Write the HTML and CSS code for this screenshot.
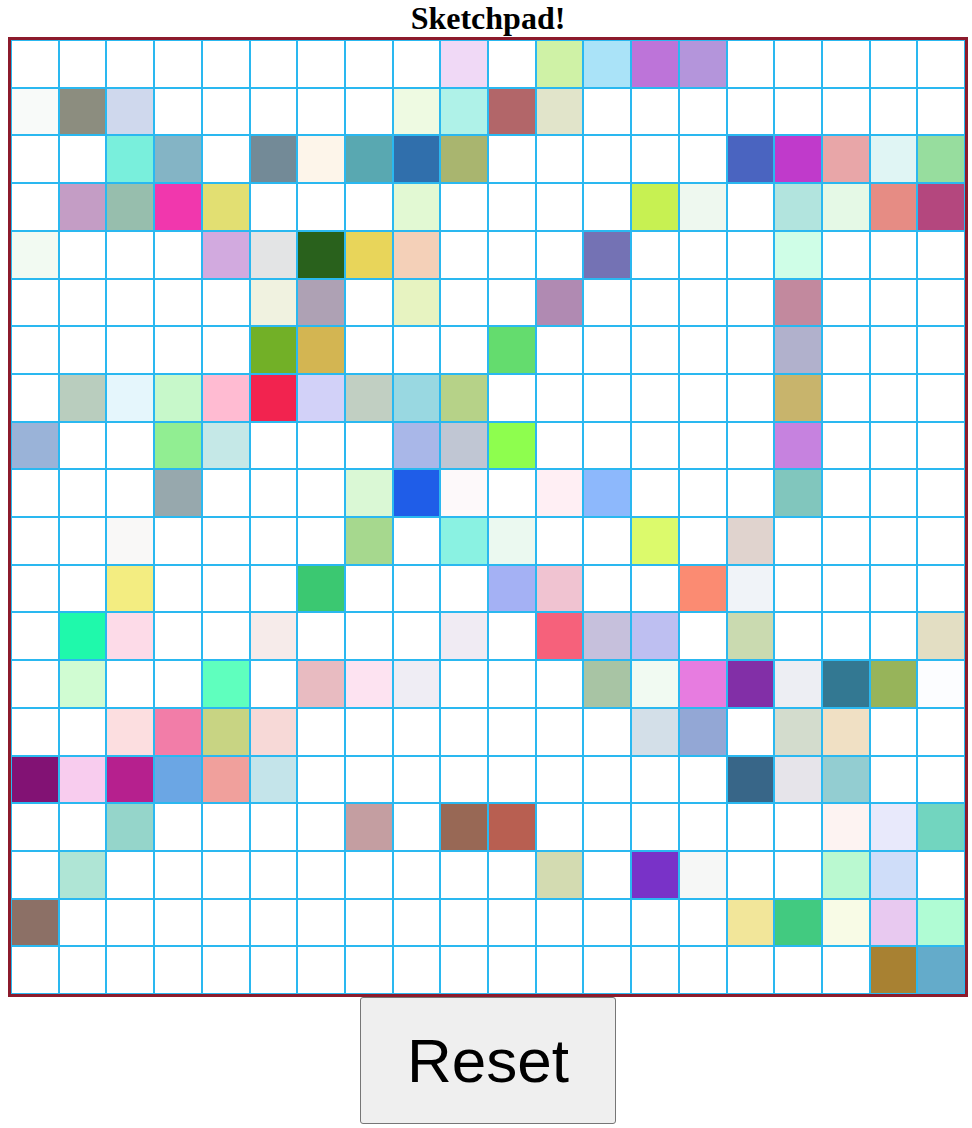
FILE: index.html
```html
<!DOCTYPE html>
<html lang="en">

<head>
  <meta charset="UTF-8" />
  <meta name="viewport" content="width=device-width, initial-scale=1" />
  <title>Sketchpad</title>
  <link rel="stylesheet" href="styles.css">
</head>

<body>
  <div class="sketchpad">
    <h1>Sketchpad!</h1>
    <div id="grid" class="grid"></div>
    <button id="reset" class="reset-btn">Reset</button>
  </div>

  <script>
    const grid = document.getElementById('grid');
    const resetBtn = document.getElementById('reset');
    const SIZE = 20;

    // cells already painted, "row,col": colour
    const painted = {
      '0,9': '#f0d9f6', '0,11': '#cff2a6', '0,12': '#aae3f8', '0,13': '#bd74d9', '0,14': '#b495db',
      '1,0': '#f8faf9', '1,1': '#8c8d7f', '1,2': '#cfd8ed', '1,8': '#eefae2', '1,9': '#aff2e8', '1,10': '#b26669', '1,11': '#e1e4ca',
      '2,2': '#79efdc', '2,3': '#84b4c5', '2,5': '#738a97', '2,6': '#fdf5ea', '2,7': '#59a8b1', '2,8': '#306fac', '2,9': '#a9b56f',
      '2,15': '#4a64c0', '2,16': '#c03acb', '2,17': '#e8a6a8', '2,18': '#e0f5f4', '2,19': '#97dd9e',
      '3,1': '#c49dc5', '3,2': '#97bead', '3,3': '#f137ad', '3,4': '#e2df72', '3,8': '#e2f9d3',
      '3,13': '#c7f152', '3,14': '#eef8ef', '3,16': '#b2e4de', '3,17': '#e5f9e6', '3,18': '#e68c84', '3,19': '#b4477e',
      '4,0': '#f2faf2', '4,4': '#d2aadf', '4,5': '#e3e4e5', '4,6': '#29611c', '4,7': '#e8d55a', '4,8': '#f4d0b8', '4,12': '#7472b4', '4,16': '#cffee7',
      '5,5': '#f0f2e0', '5,6': '#aea1b4', '5,8': '#e7f3c1', '5,11': '#b08ab2', '5,16': '#c2899e',
      '6,5': '#72b027', '6,6': '#d3b552', '6,10': '#64dc6e', '6,16': '#b1b1cc',
      '7,1': '#b9cdbe', '7,2': '#e5f6fc', '7,3': '#c7f8ca', '7,4': '#ffbbd2', '7,5': '#f2234f', '7,6': '#d2d1f8',
      '7,7': '#c1cfc2', '7,8': '#99d8e1', '7,9': '#b6d288', '7,16': '#c8b46c',
      '8,0': '#9ab3d8', '8,3': '#91ee92', '8,4': '#c5e8e7', '8,8': '#a9b7e8', '8,9': '#c0c6d3', '8,10': '#8efe4e', '8,16': '#c682df',
      '9,3': '#97a8ad', '9,7': '#daf8d5', '9,8': '#1f5de8', '9,9': '#fdf9fa', '9,11': '#ffeff4', '9,12': '#8db8fc', '9,16': '#81c6bd',
      '10,2': '#f9f8f7', '10,7': '#a6d88e', '10,9': '#8af2e2', '10,10': '#ebf9f0', '10,13': '#dcfa6c', '10,15': '#e0d3ce',
      '11,2': '#f3ed81', '11,6': '#3bc871', '11,10': '#a4b1f4', '11,11': '#f0c3d1', '11,14': '#fb8b72', '11,15': '#f0f3f8',
      '12,1': '#1ff9ab', '12,2': '#fddbe8', '12,5': '#f6ebea', '12,9': '#f0ebf3', '12,11': '#f6617b', '12,12': '#c6c0dc',
      '12,13': '#bebff1', '12,15': '#cadab0', '12,19': '#e3dec3',
      '13,1': '#d0fcd2', '13,4': '#5fffbe', '13,6': '#e8bbc1', '13,7': '#fde3f1', '13,8': '#efedf4', '13,12': '#a8c4a4',
      '13,13': '#f1faf2', '13,14': '#e77ce0', '13,15': '#822fa7', '13,16': '#edeef3', '13,17': '#337892', '13,18': '#97b45a', '13,19': '#fcfdff',
      '14,2': '#fcdee0', '14,3': '#f27da8', '14,4': '#c8d483', '14,5': '#f7d9d7', '14,13': '#d3dfe8', '14,14': '#93a7d5',
      '14,16': '#d3dccd', '14,17': '#f0e0c4',
      '15,0': '#821274', '15,1': '#f8ccee', '15,2': '#b6208e', '15,3': '#6ba6e4', '15,4': '#f0a09c', '15,5': '#c4e4ea',
      '15,15': '#386688', '15,16': '#e6e4ea', '15,17': '#93cdd1',
      '16,2': '#95d5ca', '16,7': '#c49ea1', '16,9': '#986855', '16,10': '#b85f51', '16,17': '#fdf3f2', '16,18': '#e8e9fb', '16,19': '#72d5bf',
      '17,1': '#afe5d5', '17,11': '#d3dbb1', '17,13': '#7932c8', '17,14': '#f6f7f6', '17,17': '#baf9d0', '17,18': '#cfddf9',
      '18,0': '#8c7066', '18,15': '#f2e69a', '18,16': '#42ca80', '18,17': '#f8fbe6', '18,18': '#e8c9f0', '18,19': '#b0fcd4',
      '19,18': '#a88132', '19,19': '#64abca'
    };

    function randomColor() {
      const h = Math.floor(Math.random() * 360);
      return `hsl(${h}, 60%, 70%)`;
    }

    // Build the 20x20 grid
    for (let r = 0; r < SIZE; r++) {
      for (let c = 0; c < SIZE; c++) {
        const cell = document.createElement('div');
        cell.className = 'cell';
        const color = painted[`${r},${c}`];
        if (color) cell.style.backgroundColor = color;
        cell.addEventListener('mouseenter', () => {
          cell.style.backgroundColor = randomColor();
        });
        grid.appendChild(cell);
      }
    }

    resetBtn.addEventListener('click', () => {
      grid.querySelectorAll('.cell').forEach(cell => {
        cell.style.backgroundColor = '';
      });
    });
  </script>
</body>

</html>
```

FILE: styles.css
```css
body {
  margin: 0;
  padding-left: 8px;
  background: #ffffff;
}

.sketchpad {
  width: 960px;
  display: flex;
  flex-direction: column;
  align-items: center;
}

h1 {
  margin: 0;
  font-family: 'Liberation Serif', 'Times New Roman', serif;
  font-size: 32px;
  font-weight: bold;
  line-height: 37px;
  color: #000000;
}

.grid {
  box-sizing: border-box;
  width: 960px;
  height: 960px;
  border: 3px solid #8c1b2c;
  display: grid;
  grid-template-columns: repeat(20, 1fr);
  grid-template-rows: repeat(20, 1fr);
}

.cell {
  border: 1px solid #2ab8f0;
  background-color: #ffffff;
}

.reset-btn {
  font-family: 'Liberation Sans', Arial, sans-serif;
  font-size: 62px;
  color: #000000;
  background-color: #efefef;
  border: 1px solid #767676;
  border-radius: 3px;
  padding: 27px 46px;
  cursor: pointer;
}

.reset-btn:hover {
  background-color: #e5e5e5;
}
```
